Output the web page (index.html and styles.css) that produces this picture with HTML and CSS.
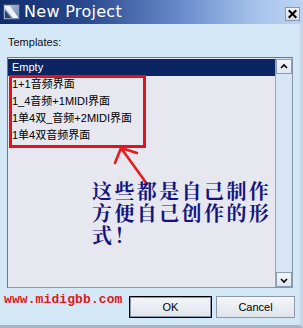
FILE: index.html
```html
<!DOCTYPE html>
<html>
<head>
<meta charset="utf-8">
<link rel="stylesheet" href="styles.css">
</head>
<body>
<div class="window">
  <div class="titlebar">
    <svg class="app-icon" width="17" height="16" viewBox="0 0 17 16">
      <defs>
        <linearGradient id="ig" x1="0" y1="0" x2="1" y2="1">
          <stop offset="0" stop-color="#b8c8dc"/>
          <stop offset="1" stop-color="#6c84a8"/>
        </linearGradient>
      </defs>
      <rect x="0" y="0" width="17" height="16" fill="url(#ig)"/>
      <polygon points="2,2 7,2 15,13 15,14 10,14 2,4" fill="#eef3f8"/>
      <polygon points="2,6 8,14 2,14" fill="#2c4068"/>
      <rect x="0.5" y="0.5" width="16" height="15" fill="none" stroke="#3a4c70"/>
    </svg>
    <span class="title">New Project</span>
    <div class="close">
      <svg width="15" height="14" viewBox="0 0 15 14">
        <path d="M4 3.5 L11 10.5 M11 3.5 L4 10.5" stroke="#000" stroke-width="2.4" stroke-linecap="square"/>
      </svg>
    </div>
  </div>
  <div class="content">
    <div class="label">Templates:</div>
    <div class="listbox">
      <div class="list">
        <div class="row selected">Empty</div>
        <div class="row">1+1音频界面</div>
        <div class="row">1_4音频+1MIDI界面</div>
        <div class="row">1单4双_音频+2MIDI界面</div>
        <div class="row">1单4双音频界面</div>
      </div>
      <div class="scrollbar">
        <div class="sb-btn">
          <svg width="14" height="14" viewBox="0 0 14 14"><path d="M4 8 L7 5 L10 8" fill="none" stroke="#000" stroke-width="1.6"/></svg>
        </div>
        <div class="sb-track"></div>
        <div class="sb-btn">
          <svg width="14" height="14" viewBox="0 0 14 14"><path d="M4 6 L7 9 L10 6" fill="none" stroke="#000" stroke-width="1.6"/></svg>
        </div>
      </div>
      <div class="highlight"></div>
      <svg class="arrow" width="268" height="229" viewBox="0 0 268 229">
        <path d="M113 90 L139 126 M113 90 L107 105 M113 90 L129 95" fill="none" stroke="#e81c1c" stroke-width="2.6" stroke-linecap="round"/>
      </svg>
      <div class="note">
        <div class="note-line">这些都是自己制作</div>
        <div class="note-line">方便自己创作的形</div>
        <div class="note-line">式！</div>
      </div>
    </div>
    <div class="footer">
      <span class="watermark">www.midigbb.com</span>
      <div class="buttons">
        <div class="btn default">OK</div>
        <div class="btn cancel">Cancel</div>
      </div>
    </div>
  </div>
</div>
</body>
</html>
```
FILE: styles.css
```css
html, body {
  margin: 0;
  padding: 0;
  background: #d4e8f8;
}

.window {
  width: 303px;
  height: 328px;
  box-sizing: border-box;
  display: flex;
  flex-direction: column;
  background: #d4e8f8;
  border-right: 3px solid #c4d6e8;
  border-bottom: 3px solid #a8b4c4;
  font-family: "Liberation Sans", Arial, sans-serif;
}

.titlebar {
  height: 24px;
  flex: 0 0 24px;
  display: flex;
  align-items: center;
  background: linear-gradient(to right, #0f2b6c 0%, #2c4c90 30%, #6a8ccc 60%, #a8c4ec 85%, #bcd4f2 100%);
  margin-right: -3px;
}

.app-icon {
  margin-left: 3px;
  flex: 0 0 auto;
}

.title {
  margin-left: 4px;
  color: #ffffff;
  font-family: "DejaVu Sans", Verdana, sans-serif;
  font-size: 16px;
  letter-spacing: 0.3px;
  line-height: 20px;
  flex: 1 1 auto;
}

.close {
  width: 15px;
  height: 14px;
  margin-right: 3px;
  margin-top: 4px;
  box-sizing: border-box;
  background: linear-gradient(#eef2f6, #d4dde8);
  border: 1px solid #8a98ac;
  display: flex;
  align-items: center;
  justify-content: center;
}

.close svg {
  display: block;
}

.content {
  flex: 1 1 auto;
  display: flex;
  flex-direction: column;
  padding-top: 12px;
}

.label {
  margin-left: 8px;
  font-size: 11px;
  line-height: 13px;
  color: #101010;
}

.listbox {
  position: relative;
  margin: 8px 0 0 7px;
  width: 286px;
  height: 231px;
  box-sizing: border-box;
  border: 1px solid #6c7688;
  border-right-color: #8a96a8;
  border-bottom-color: #8a96a8;
  background: #e6e7ef;
  display: flex;
}

.list {
  flex: 1 1 auto;
  padding-top: 1px;
}

.row {
  height: 17px;
  line-height: 17px;
  padding-left: 4px;
  font-family: "Liberation Sans", "Noto Sans CJK SC", sans-serif;
  font-size: 11px;
  color: #000;
  white-space: nowrap;
}

.row.selected {
  background: #0b2563;
  color: #ffffff;
}

.scrollbar {
  flex: 0 0 16px;
  display: flex;
  flex-direction: column;
  background: #d6e6f6;
  border-left: 1px solid #98a8bc;
  padding-top: 1px;
}

.sb-btn {
  height: 15px;
  box-sizing: border-box;
  border: 1px solid #8c9cb2;
  background: linear-gradient(#f2f6fa, #dfe8f2);
  display: flex;
  align-items: center;
  justify-content: center;
}

.sb-btn svg {
  display: block;
}

.sb-track {
  flex: 1 1 auto;
}

.highlight {
  position: absolute;
  left: 1px;
  top: 17px;
  width: 137px;
  height: 73px;
  box-sizing: border-box;
  border: 3px solid #e2121c;
}

.arrow {
  position: absolute;
  left: 0;
  top: 0;
}

.note {
  position: absolute;
  left: 84px;
  top: 122px;
  display: flex;
  flex-direction: column;
  font-family: "Noto Serif CJK SC", "Noto Sans CJK SC", serif;
  font-weight: 700;
  font-size: 20px;
  letter-spacing: 2.4px;
  color: #14147e;
  white-space: nowrap;
}

.note-line {
  height: 22px;
  line-height: 22px;
  overflow: visible;
}

.footer {
  margin-top: 8px;
  display: flex;
  justify-content: space-between;
  align-items: flex-start;
  padding: 0 5px 0 4px;
}

.watermark {
  margin-top: -3px;
  font-family: "Liberation Mono", "Courier New", monospace;
  font-weight: 700;
  font-size: 13px;
  line-height: 13px;
  color: #e01818;
  letter-spacing: 0.1px;
}

.buttons {
  display: flex;
  gap: 4px;
}

.btn {
  height: 22px;
  box-sizing: border-box;
  display: flex;
  align-items: center;
  justify-content: center;
  font-size: 11px;
  color: #000;
  background: linear-gradient(#f4f6f9, #dfe4ec);
  border: 1px solid #8c98aa;
}

.btn.default {
  width: 83px;
  border: 1px solid #000;
  box-shadow: inset 0 0 0 1px #8c98aa;
}

.btn.cancel {
  width: 79px;
}
```
